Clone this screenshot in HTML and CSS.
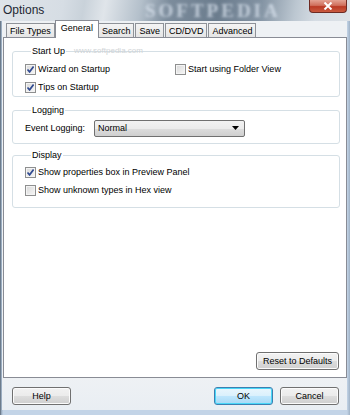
FILE: index.html
```html
<!DOCTYPE html>
<html lang="en">
<head>
    <meta charset="UTF-8">
    <title>Options</title>
    <link rel="stylesheet" href="styles.css">
</head>
<body>
    <div class="window">
        <div class="titlebar">
            <span class="title">Options</span>
            <span class="brand">SOFTPEDIA</span>
            <button class="close-btn">
                <svg width="10" height="8" viewBox="0 0 10 8"><path d="M1.5 0.5 L8.5 7.5 M8.5 0.5 L1.5 7.5" stroke="#fff" stroke-width="2"/></svg>
            </button>
        </div>

        <div class="client">
            <div class="tabs">
                <div class="tab">File Types</div>
                <div class="tab active">General</div>
                <div class="tab">Search</div>
                <div class="tab">Save</div>
                <div class="tab">CD/DVD</div>
                <div class="tab">Advanced</div>
            </div>

            <div class="panel">
                <span class="watermark">www.softpedia.com</span>

                <fieldset class="group startup">
                    <legend>Start Up</legend>
                    <div class="row">
                        <label class="check wide"><span class="box checked"></span>Wizard on Startup</label>
                        <label class="check"><span class="box"></span>Start using Folder View</label>
                    </div>
                    <div class="row">
                        <label class="check"><span class="box checked"></span>Tips on Startup</label>
                    </div>
                </fieldset>

                <fieldset class="group logging">
                    <legend>Logging</legend>
                    <div class="row">
                        <span class="field-label">Event Logging:</span>
                        <div class="select">
                            <span>Normal</span>
                            <svg width="7" height="4" viewBox="0 0 7 4"><path d="M0 0 H7 L3.5 4 Z" fill="#000"/></svg>
                        </div>
                    </div>
                </fieldset>

                <fieldset class="group display">
                    <legend>Display</legend>
                    <div class="row">
                        <label class="check"><span class="box checked"></span>Show properties box in Preview Panel</label>
                    </div>
                    <div class="row">
                        <label class="check"><span class="box"></span>Show unknown types in Hex view</label>
                    </div>
                </fieldset>

                <div class="spacer"></div>

                <div class="panel-actions">
                    <button class="btn reset">Reset to Defaults</button>
                </div>
            </div>

            <div class="footer">
                <button class="btn">Help</button>
                <div class="footer-right">
                    <button class="btn default">OK</button>
                    <button class="btn">Cancel</button>
                </div>
            </div>
        </div>
    </div>
</body>
</html>
```

FILE: styles.css
```css
* {
    margin: 0;
    padding: 0;
    box-sizing: border-box;
    font-family: 'Liberation Sans', Arial, sans-serif;
}

body {
    width: 350px;
    height: 415px;
    overflow: hidden;
    background: #bccde0;
}

.window {
    width: 350px;
    height: 415px;
    display: flex;
    flex-direction: column;
    background: linear-gradient(to right, #8da0b4 0, #c3d4e7 2px, #c3d4e7 346px, #9fb2c6 349px);
    border-left: 1px solid #6d7c8c;
    padding-bottom: 5px;
}

/* title bar */

.titlebar {
    position: relative;
    height: 21px;
    flex-shrink: 0;
    display: flex;
    justify-content: space-between;
    align-items: flex-start;
    background: linear-gradient(100deg, #dfe4e9 0%, #d6dde4 18%, #c9d2da 24%, #e0e5ea 30%, #b4c0cb 40%, #7c8c9c 48%, #6b7c8d 62%, #8393a3 74%, #bcc7d1 84%, #d5dce3 90%, #dde2e7 100%);
    margin-left: -1px;
}

.title {
    font-family: 'Liberation Sans', Arial, sans-serif;
    font-size: 12px;
    color: #1e2833;
    padding: 3px 0 0 3px;
}

.brand {
    position: absolute;
    left: 145px;
    top: 1px;
    font-family: 'Liberation Serif', serif;
    font-size: 19px;
    line-height: 19px;
    font-weight: bold;
    letter-spacing: 3px;
    color: transparent;
    text-shadow: 0 0 3px rgba(220, 230, 240, 0.75);
}

.close-btn {
    width: 38px;
    height: 13px;
    margin-right: 3px;
    border: 1px solid #6e2a22;
    border-top: none;
    border-radius: 0 0 4px 4px;
    background: linear-gradient(to bottom, #e4a293 0%, #d06f5c 45%, #bb3a25 55%, #c95a3f 100%);
    display: flex;
    align-items: center;
    justify-content: center;
    position: relative;
    z-index: 1;
}

/* client area */

.client {
    flex: 1;
    margin: 0 3px 0 1px;
    display: flex;
    flex-direction: column;
    background: #eef1f4;
}

.tabs {
    height: 16px;
    display: flex;
    align-items: flex-end;
    padding-left: 3px;
    margin-left: 1px;
}

.tab {
    height: 15px;
    padding: 0 3px;
    margin-right: 1px;
    font-size: 9px;
    line-height: 14px;
    color: #000;
    border: 1px solid #8e9298;
    border-bottom: none;
    background: linear-gradient(to bottom, #f4f4f4, #e4e4e4);
    position: relative;
    top: 1px;
}

.tab.active {
    height: 18px;
    padding: 0 5px;
    margin: 0 -1px 0 -1px;
    background: #fff;
    z-index: 2;
    line-height: 14px;
    border-color: #898c95;
}

.panel {
    position: relative;
    flex: 1;
    margin-left: 1px;
    background: #fff;
    border: 1px solid #898c95;
    display: flex;
    flex-direction: column;
    padding: 0 6px 7px 8px;
}

.watermark {
    position: absolute;
    left: 70px;
    top: 8px;
    font-size: 8px;
    color: #cfd3d6;
}

/* group boxes */

.group {
    border: 1px solid #d5dfe5;
    border-radius: 3px;
    padding: 3px 0 0 12px;
    margin-top: 8px;
}

.group legend {
    font-size: 9px;
    line-height: 11px;
    color: #000;
    margin-left: 6px;
    padding: 0 1px;
}

.logging {
    margin-top: 8px;
    padding-bottom: 6px;
}

.display {
    margin-top: 6px;
    padding-top: 2px;
    padding-bottom: 8px;
}

.row {
    height: 18px;
    display: flex;
    align-items: center;
}

.check {
    display: flex;
    align-items: center;
    font-size: 9px;
    color: #000;
}

.check.wide {
    width: 150px;
}

.box {
    width: 11px;
    height: 11px;
    margin-right: 2px;
    border: 1px solid #8e8f8f;
    background: linear-gradient(135deg, #d8d8d8, #f7f7f7);
    box-shadow: inset 0 0 0 1px #f4f4f4;
}

.box.checked {
    background: url("data:image/svg+xml,%3Csvg xmlns='http://www.w3.org/2000/svg' width='9' height='9' viewBox='0 0 9 9'%3E%3Cpath d='M1.5 4.5 L3.6 6.8 L7.6 1.5' fill='none' stroke='%23304a91' stroke-width='1.7'/%3E%3C/svg%3E") center no-repeat, linear-gradient(135deg, #d8d8d8, #f7f7f7);
}

.field-label {
    width: 69px;
    font-size: 9px;
    color: #000;
}

.select {
    width: 151px;
    height: 17px;
    border: 1px solid #707070;
    border-radius: 2px;
    background: linear-gradient(to bottom, #f2f2f2 0%, #ebebeb 50%, #dddddd 51%, #cfcfcf 100%);
    display: flex;
    align-items: center;
    justify-content: space-between;
    padding: 0 5px 0 3px;
    font-size: 9px;
}

.spacer {
    flex: 1;
}

.panel-actions {
    display: flex;
    justify-content: flex-end;
    padding-right: 1px;
}

/* buttons */

.btn {
    height: 18px;
    width: 59px;
    font-size: 9px;
    color: #000;
    border: 1px solid #707070;
    border-radius: 3px;
    background: linear-gradient(to bottom, #f2f2f2 0%, #ebebeb 50%, #dddddd 51%, #cfcfcf 100%);
    box-shadow: inset 0 0 0 1px #fbfbfb;
}

.btn.reset {
    width: 83px;
}

.btn.default {
    border-color: #3c7fb1;
    box-shadow: inset 0 0 0 1px #48d7f8;
    background: linear-gradient(to bottom, #eaf6fd 0%, #d9f0fc 50%, #bee6fd 51%, #a7d9f5 100%);
}

.footer {
    height: 32px;
    display: flex;
    justify-content: space-between;
    align-items: flex-start;
    padding: 9px 8px 0 10px;
    background: linear-gradient(to bottom, #eef1f4, #e9eef3);
}

.footer-right {
    display: flex;
    gap: 7px;
}
```
